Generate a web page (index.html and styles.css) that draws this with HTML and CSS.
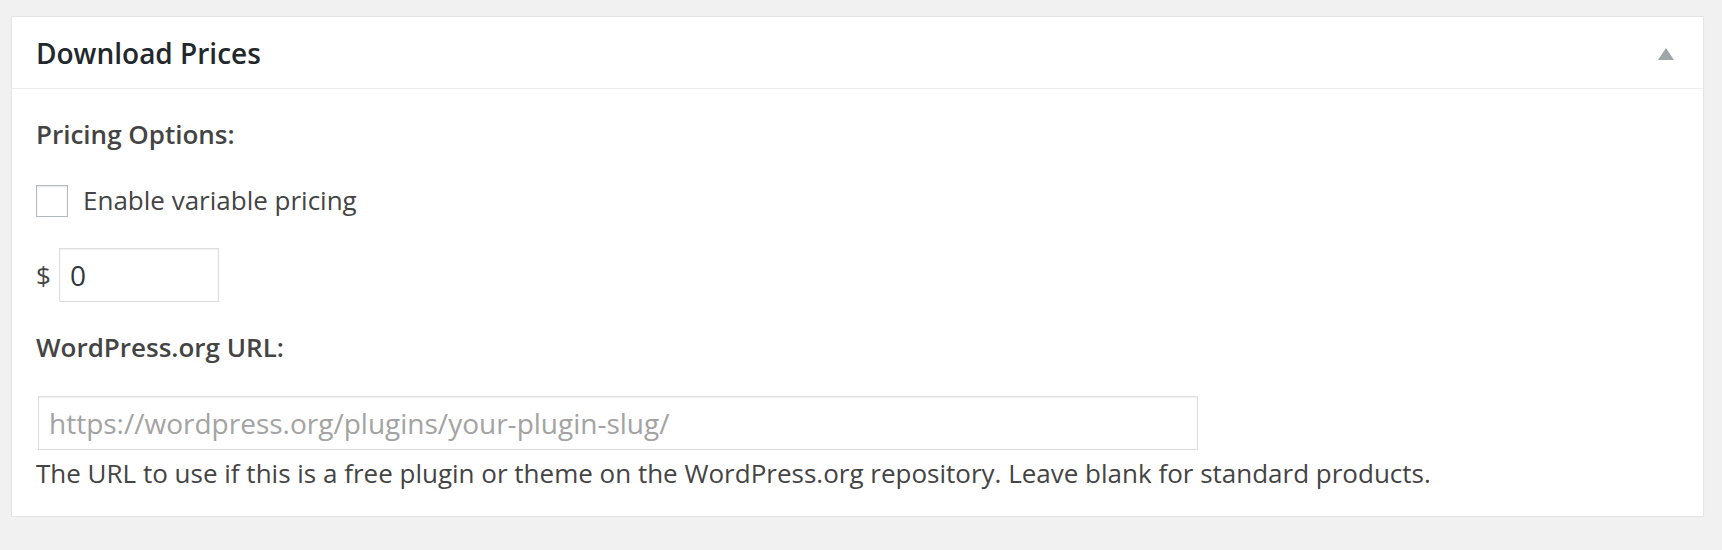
FILE: index.html
```html
<!DOCTYPE html>
<html lang="en">
<head>
    <meta charset="UTF-8">
    <meta name="viewport" content="width=device-width, initial-scale=1.0">
    <title>Download Prices</title>
    <link rel="stylesheet" href="styles.css">
</head>
<body>
    <div class="postbox">
        <div class="postbox-header">
            <h2>Download Prices</h2>
            <button class="toggle" type="button" aria-label="Toggle panel">
                <svg width="16" height="12" viewBox="0 0 16 12"><polygon points="8,0 16,12 0,12" fill="#a0a5aa"/></svg>
            </button>
        </div>
        <div class="inside">
            <p class="field-title">Pricing Options:</p>
            <label class="check-row">
                <input type="checkbox" class="checkbox">
                <span>Enable variable pricing</span>
            </label>
            <div class="price-row">
                <span class="currency">$</span>
                <input type="text" class="price-input" value="0">
            </div>
            <p class="field-title url-title">WordPress.org URL:</p>
            <input type="text" class="url-input" placeholder="https://wordpress.org/plugins/your-plugin-slug/">
            <p class="description">The URL to use if this is a free plugin or theme on the WordPress.org repository. Leave blank for standard products.</p>
        </div>
    </div>
</body>
</html>
```

FILE: styles.css
```css
body {
    font-family: "Open Sans", "Liberation Sans", sans-serif;
    background-color: #f1f1f1;
    color: #444;
    margin: 0;
    font-size: 26px;
    line-height: 39px;
}
.postbox {
    margin: 16px 18px 0 11px;
    background-color: #fff;
    border: 1px solid #e5e5e5;
    box-shadow: 0 1px 1px rgba(0,0,0,0.04);
}
.postbox-header {
    display: flex;
    justify-content: space-between;
    align-items: center;
    padding: 16px 29px 15px 24px;
    border-bottom: 1px solid #eee;
}
.postbox-header h2 {
    margin: 0;
    font-size: 28px;
    line-height: 40px;
    font-weight: 600;
    color: #23282d;
}
.toggle {
    background: none;
    border: none;
    padding: 0;
    margin-top: 2px;
    display: flex;
    cursor: pointer;
}
.inside {
    padding: 26px 24px 23px;
}
.field-title {
    margin: 0;
    font-weight: 600;
}
.check-row {
    display: flex;
    align-items: center;
    gap: 15px;
    margin-top: 27px;
    cursor: pointer;
}
.checkbox {
    appearance: none;
    -webkit-appearance: none;
    width: 32px;
    height: 32px;
    margin: 0;
    border: 1px solid #b4b9be;
    background: #fff;
    box-shadow: inset 0 1px 2px rgba(0,0,0,0.1);
}
.price-row {
    display: flex;
    align-items: center;
    gap: 8px;
    margin-top: 28px;
}
.price-input, .url-input {
    box-sizing: border-box;
    height: 54px;
    margin: 0;
    padding: 0 10px;
    font-family: inherit;
    font-size: 28px;
    color: #32373c;
    border: 1px solid #ddd;
    box-shadow: inset 0 1px 2px rgba(0,0,0,0.07);
    background: #fff;
    outline: none;
}
.price-input {
    width: 160px;
}
.url-title {
    margin-top: 26px;
}
.url-input {
    display: block;
    width: 1160px;
    margin: 29px 0 0 2px;
}
.url-input::placeholder {
    color: #a3a3a3;
}
.description {
    margin: 4px 0 0;
}
```
